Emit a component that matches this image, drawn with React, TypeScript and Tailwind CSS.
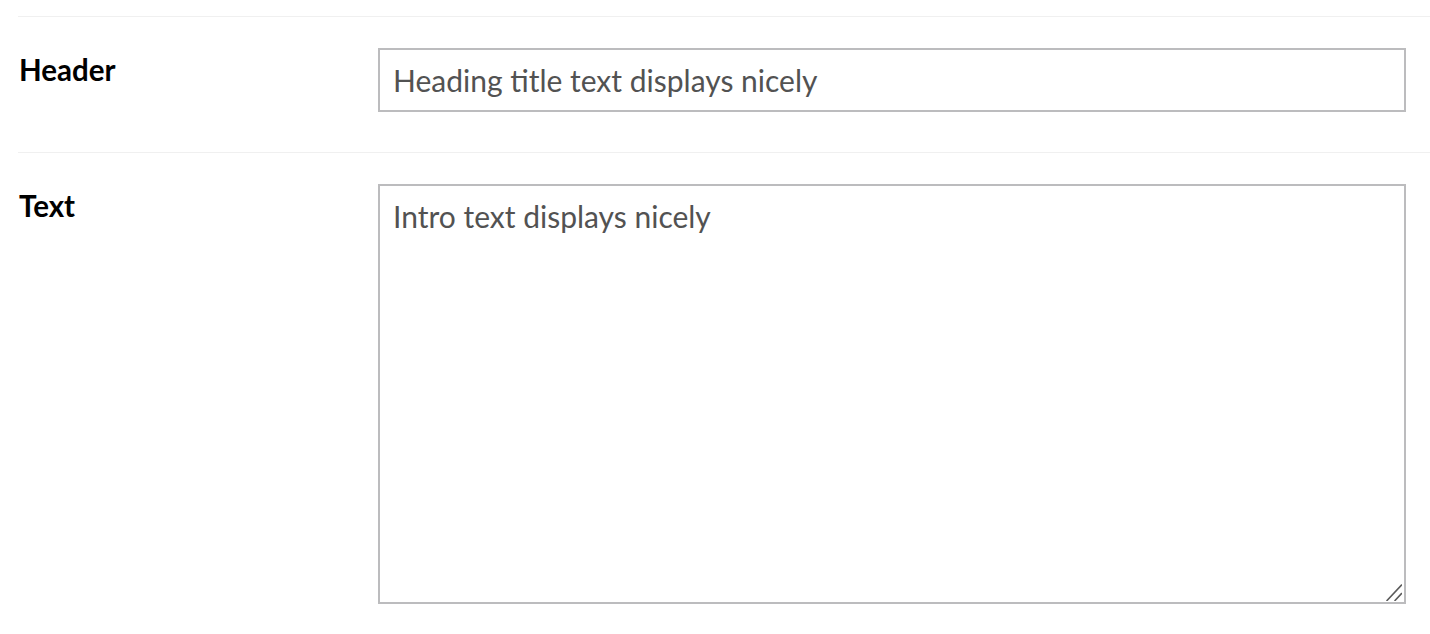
import React from 'react';

// One label + control row of the settings form
const FormRow: React.FC<{ label: string; children: React.ReactNode }> = ({ label, children }) => (
    <div className="flex border-t border-[#f0f0f0] pt-[31px] pb-[40px]">
        <label className="w-[360px] shrink-0 pl-px pt-[4px] text-[29.5px] font-bold leading-[36px] text-black">
            {label}
        </label>
        <div className="flex-1 pr-[24px]">{children}</div>
    </div>
);

export default function App() {
    return (
        <div className="min-h-screen bg-white pt-[16px] pl-[18px] font-['Lato','Noto_Sans',sans-serif]">
            <FormRow label="Header">
                <input
                    type="text"
                    defaultValue="Heading title text displays nicely"
                    className="block h-[64px] w-full border-2 border-[#bcbcbe] bg-white px-[13px] text-[30px] text-[#525252] outline-none"
                />
            </FormRow>
            <FormRow label="Text">
                <div className="relative">
                    <textarea
                        defaultValue="Intro text displays nicely"
                        className="block h-[420px] w-full resize-none border-2 border-[#bcbcbe] bg-white px-[13px] pt-[12px] text-[30px] leading-[36px] text-[#525252] outline-none"
                    />
                    {/* resize grip drawn over the corner */}
                    <svg className="pointer-events-none absolute right-[4px] bottom-[3px]" width="16" height="17" viewBox="0 0 16 17">
                        <path d="M1 16.5 L15.5 1 M9 16.5 L15.5 9.5" stroke="#5a5a5a" strokeWidth="1.6" strokeLinecap="round" fill="none" />
                    </svg>
                </div>
            </FormRow>
        </div>
    );
}
